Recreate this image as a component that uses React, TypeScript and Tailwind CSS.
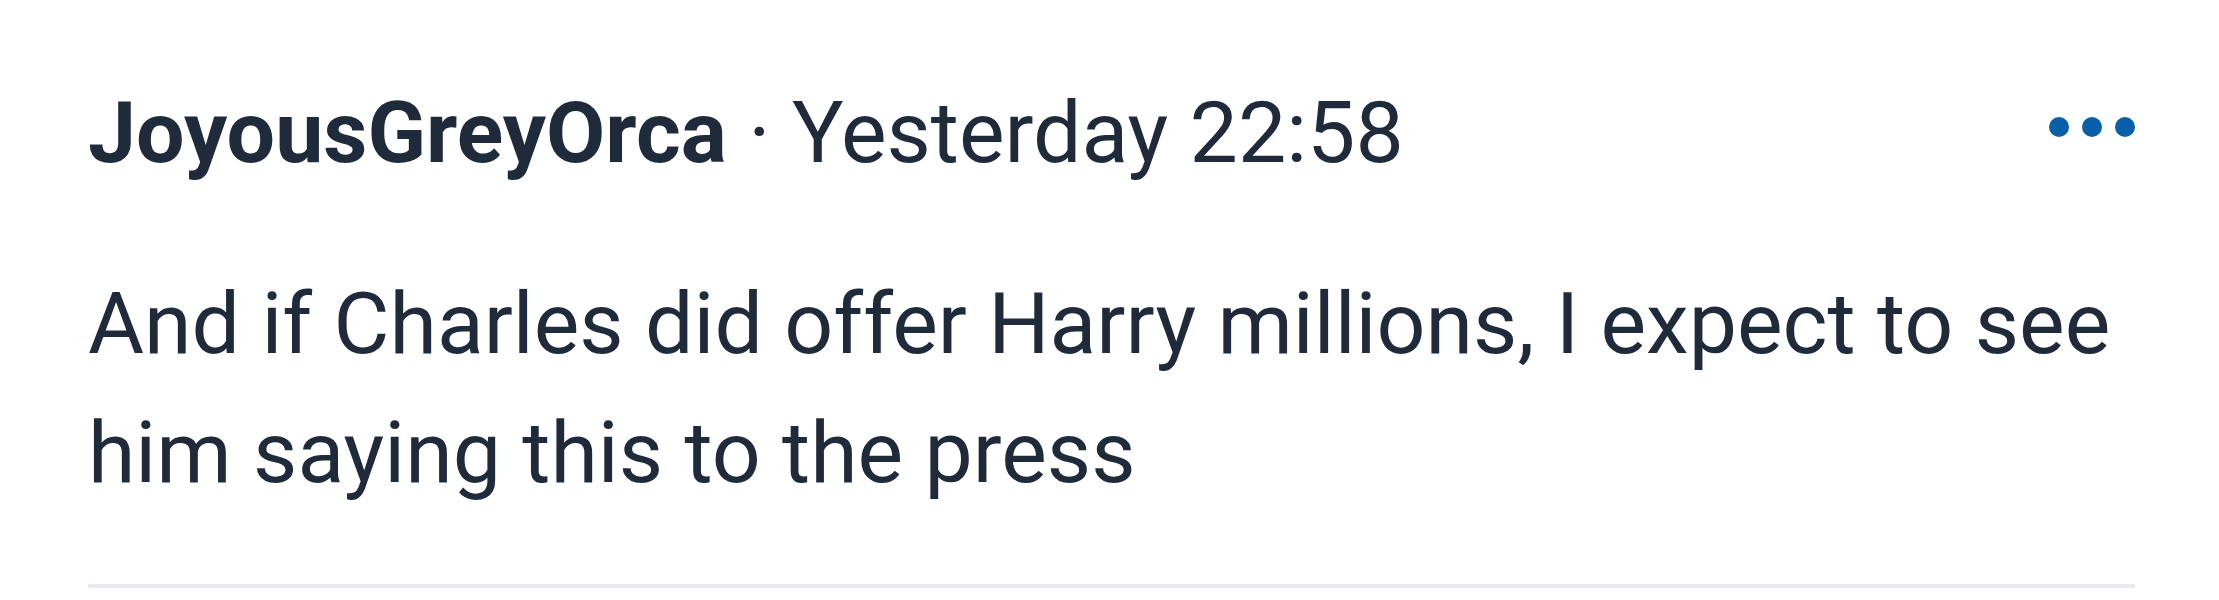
import React from 'react';

const font = { fontFamily: 'Roboto, "Noto Sans", Arial, sans-serif' };

const MoreDots: React.FC = () => (
  <button className="flex items-center gap-[13px] mt-[49px]" aria-label="More options">
    <span className="w-[20px] h-[20px] rounded-full bg-[#0a60a8]" />
    <span className="w-[20px] h-[20px] rounded-full bg-[#0a60a8]" />
    <span className="w-[20px] h-[20px] rounded-full bg-[#0a60a8]" />
  </button>
);

export default function App() {
  return (
    <div className="w-[2219px] h-[600px] bg-white" style={font}>
      <div className="pl-[88px] pr-[84px] pt-[68px]">
        <div className="flex items-start justify-between">
          <div className="text-[86px] leading-[1.5] text-[#1f2a3a] whitespace-nowrap">
            <span className="font-bold">JoyousGreyOrca</span>
            <span> · Yesterday 22:58</span>
          </div>
          <MoreDots />
        </div>

        <p className="mt-[62px] text-[86px] leading-[1.5] text-[#1f2a3a]">
          And if Charles did offer Harry millions, I expect to see him saying this to the press
        </p>

        <div className="mt-[67px] h-[4px] bg-[#e9e9ef]" />
      </div>
    </div>
  );
}
